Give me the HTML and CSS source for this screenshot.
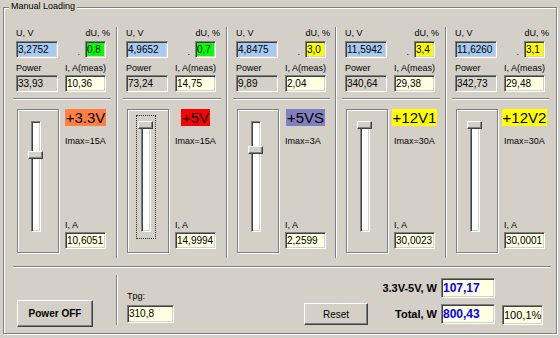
FILE: index.html
```html
<!DOCTYPE html>
<html lang="en">

<head>
    <meta charset="UTF-8">
    <title>Manual Loading</title>
    <link rel="stylesheet" href="styles.css">
</head>

<body>
    <div class="group">
        <span class="legend">Manual Loading</span>

        <div class="channels">
            <!-- +3.3V -->
            <div class="ch">
                <div class="meas">
                    <div class="row labels"><span class="lbl-l">U, V</span><span class="lbl-r du-lbl">dU, %</span></div>
                    <div class="row boxes">
                        <div class="edit volt">3,2752</div>
                        <span class="dot">.</span>
                        <div class="edit du green">0,8</div>
                    </div>
                    <div class="row labels second"><span class="lbl-l">Power</span><span class="lbl-r">I, A(meas)</span></div>
                    <div class="row boxes tight">
                        <div class="edit ro">33,93</div>
                        <div class="edit cur">10,36</div>
                    </div>
                </div>
                <div class="hsep"></div>
                <div class="load">
                    <div class="frame">
                        <div class="focus">
                            <div class="track"><div class="thumb" style="top: 29px"></div></div>
                        </div>
                    </div>
                    <div class="side">
                        <div class="name"><span class="orange">+3.3V</span></div>
                        <div class="imax">Imax=15A</div>
                        <div class="ia">I, A</div>
                        <div class="edit cur">10,6051</div>
                    </div>
                </div>
            </div>

            <!-- +5V -->
            <div class="ch">
                <div class="meas">
                    <div class="row labels"><span class="lbl-l">U, V</span><span class="lbl-r du-lbl">dU, %</span></div>
                    <div class="row boxes">
                        <div class="edit volt">4,9652</div>
                        <span class="dot">.</span>
                        <div class="edit du green">0,7</div>
                    </div>
                    <div class="row labels second"><span class="lbl-l">Power</span><span class="lbl-r">I, A(meas)</span></div>
                    <div class="row boxes tight">
                        <div class="edit ro">73,24</div>
                        <div class="edit cur">14,75</div>
                    </div>
                </div>
                <div class="hsep"></div>
                <div class="load">
                    <div class="frame">
                        <div class="focus active">
                            <div class="track"><div class="thumb" style="top: -1px"></div></div>
                        </div>
                    </div>
                    <div class="side">
                        <div class="name"><span class="red">+5V</span></div>
                        <div class="imax">Imax=15A</div>
                        <div class="ia">I, A</div>
                        <div class="edit cur">14,9994</div>
                    </div>
                </div>
            </div>

            <!-- +5VS -->
            <div class="ch">
                <div class="meas">
                    <div class="row labels"><span class="lbl-l">U, V</span><span class="lbl-r du-lbl">dU, %</span></div>
                    <div class="row boxes">
                        <div class="edit volt">4,8475</div>
                        <span class="dot">.</span>
                        <div class="edit du yellow">3,0</div>
                    </div>
                    <div class="row labels second"><span class="lbl-l">Power</span><span class="lbl-r">I, A(meas)</span></div>
                    <div class="row boxes tight">
                        <div class="edit ro">9,89</div>
                        <div class="edit cur">2,04</div>
                    </div>
                </div>
                <div class="hsep"></div>
                <div class="load">
                    <div class="frame">
                        <div class="focus">
                            <div class="track"><div class="thumb" style="top: 24px"></div></div>
                        </div>
                    </div>
                    <div class="side">
                        <div class="name"><span class="violet">+5VS</span></div>
                        <div class="imax">Imax=3A</div>
                        <div class="ia">I, A</div>
                        <div class="edit cur">2,2599</div>
                    </div>
                </div>
            </div>

            <!-- +12V1 -->
            <div class="ch">
                <div class="meas">
                    <div class="row labels"><span class="lbl-l">U, V</span><span class="lbl-r du-lbl">dU, %</span></div>
                    <div class="row boxes">
                        <div class="edit volt">11,5942</div>
                        <span class="dot">.</span>
                        <div class="edit du yellow">3,4</div>
                    </div>
                    <div class="row labels second"><span class="lbl-l">Power</span><span class="lbl-r">I, A(meas)</span></div>
                    <div class="row boxes tight">
                        <div class="edit ro">340,64</div>
                        <div class="edit cur">29,38</div>
                    </div>
                </div>
                <div class="hsep"></div>
                <div class="load">
                    <div class="frame">
                        <div class="focus">
                            <div class="track"><div class="thumb" style="top: -1px"></div></div>
                        </div>
                    </div>
                    <div class="side">
                        <div class="name"><span class="yellow">+12V1</span></div>
                        <div class="imax">Imax=30A</div>
                        <div class="ia">I, A</div>
                        <div class="edit cur">30,0023</div>
                    </div>
                </div>
            </div>

            <!-- +12V2 -->
            <div class="ch">
                <div class="meas">
                    <div class="row labels"><span class="lbl-l">U, V</span><span class="lbl-r du-lbl">dU, %</span></div>
                    <div class="row boxes">
                        <div class="edit volt">11,6260</div>
                        <span class="dot">.</span>
                        <div class="edit du yellow">3,1</div>
                    </div>
                    <div class="row labels second"><span class="lbl-l">Power</span><span class="lbl-r">I, A(meas)</span></div>
                    <div class="row boxes tight">
                        <div class="edit ro">342,73</div>
                        <div class="edit cur">29,48</div>
                    </div>
                </div>
                <div class="hsep"></div>
                <div class="load">
                    <div class="frame">
                        <div class="focus">
                            <div class="track"><div class="thumb" style="top: -1px"></div></div>
                        </div>
                    </div>
                    <div class="side">
                        <div class="name"><span class="yellow">+12V2</span></div>
                        <div class="imax">Imax=30A</div>
                        <div class="ia">I, A</div>
                        <div class="edit cur">30,0001</div>
                    </div>
                </div>
            </div>
        </div>

        <div class="hline"></div>

        <div class="bottom">
            <button class="btn power">Power OFF</button>
            <div class="vsep"></div>
            <div class="tpg">
                <div class="tpg-lbl">Tpg:</div>
                <div class="edit cur tpg-box">310,8</div>
            </div>
            <button class="btn reset">Reset</button>
            <div class="totals">
                <div class="trow">
                    <span class="tlbl">3.3V-5V, W</span>
                    <div class="edit total">107,17</div>
                </div>
                <div class="trow second">
                    <span class="tlbl">Total, W</span>
                    <div class="edit total">800,43</div>
                    <div class="edit pct">100,1%</div>
                </div>
            </div>
        </div>
    </div>
</body>

</html>
```

FILE: styles.css
```css
body {
    margin: 0;
    width: 560px;
    height: 338px;
    overflow: hidden;
    background-color: #d4d0c8;
    font-family: "Liberation Sans", Arial, sans-serif;
    font-size: 9px;
    color: #000;
}

/* group box */
.group {
    position: relative;
    box-sizing: border-box;
    width: 554px;
    height: 327px;
    margin: 7px 0 0 3px;
    padding: 19px 0 0 2px;
    border: 1px solid #808080;
    box-shadow: inset 1px 1px #fff, 1px 1px #fff;
}

.legend {
    position: absolute;
    top: -7px;
    left: 5px;
    padding: 0 2px;
    line-height: 11px;
    background-color: #d4d0c8;
}

.channels {
    display: grid;
    grid-template-columns: 110px 110px 109px 110px 109px;
    height: 231px;
}

.ch {
    border-left: 1px solid #808080;
    box-shadow: inset 1px 0 #fff;
}

.ch:first-child {
    border-left-color: transparent;
    box-shadow: none;
}

/* measured values */
.meas {
    padding: 1px 0 0 9px;
}

.row {
    display: flex;
    width: 90px;
}

.labels {
    height: 11px;
    line-height: 11px;
    white-space: nowrap;
}

.labels.second {
    margin-top: 5px;
}

.lbl-l {
    width: 49px;
}

.lbl-r {
    flex: 1;
}

.du-lbl {
    text-align: right;
    margin-right: -4px;
}

.boxes {
    align-items: flex-end;
    margin-top: 2px;
}

.boxes.tight {
    margin-top: 1px;
}

.dot {
    margin-left: auto;
    margin-right: 5px;
    line-height: 11px;
}

/* sunken edit box */
.edit {
    box-sizing: border-box;
    height: 17px;
    padding-left: 1px;
    border: 1px solid;
    border-color: #808080 #fff #fff #808080;
    box-shadow: inset 1px 1px #404040, inset -1px -1px #d4d0c8;
    font-size: 10px;
    line-height: 15px;
    white-space: nowrap;
    overflow: hidden;
    background-color: #ffffe1;
}

.volt {
    width: 42px;
    background-color: #a6caf0;
}

.du {
    width: 21px;
}

.green {
    background-color: #00ff00;
}

.yellow {
    background-color: #ffff00;
}

.ro {
    width: 42px;
    background-color: #d4d0c8;
}

.cur {
    width: 41px;
}

.boxes .cur {
    margin-left: 7px;
}

.hsep {
    border-top: 1px solid #808080;
    border-bottom: 1px solid #fff;
    margin: 6px 5px 0 6px;
}

/* slider + channel info */
.load {
    display: flex;
    margin: 9px 0 0 10px;
}

.frame {
    box-sizing: border-box;
    width: 42px;
    height: 144px;
    border: 1px solid #808080;
    box-shadow: inset 1px 1px #fff, 1px 1px #fff;
}

.focus {
    width: 10px;
    height: 111px;
    padding: 5px 4px 6px 4px;
    margin: 5px 0 0 8px;
    border: 1px dotted transparent;
}

.focus.active {
    border-color: #303030;
}

.track {
    position: relative;
    box-sizing: border-box;
    width: 10px;
    height: 111px;
    background-color: #fff;
    border: 1px solid;
    border-color: #808080 #fff #fff #808080;
    box-shadow: inset 1px 1px #404040, inset -1px -1px #d4d0c8;
}

.thumb {
    position: absolute;
    left: -4px;
    box-sizing: border-box;
    width: 15px;
    height: 8px;
    background-color: #d4d0c8;
    border: 1px solid;
    border-color: #fff #404040 #404040 #fff;
    box-shadow: inset -1px -1px #808080;
}

.side {
    display: flex;
    flex-direction: column;
    box-sizing: border-box;
    width: 41px;
    height: 144px;
    margin-left: 6px;
    padding-bottom: 4px;
}

.name {
    display: flex;
    justify-content: center;
    height: 17px;
}

.name span {
    padding: 0 1px;
    font-size: 15px;
    line-height: 17px;
    white-space: nowrap;
}

.orange { background-color: #ff8040; }
.red { background-color: #ff0000; }
.violet { background-color: #8080c0; }

.imax {
    margin-top: 10px;
    line-height: 11px;
    white-space: nowrap;
}

.ia {
    margin-top: auto;
    line-height: 11px;
}

.side .edit {
    margin-top: 1px;
}

/* bottom strip */
.hline {
    border-top: 1px solid #808080;
    border-bottom: 1px solid #fff;
    margin: 8px 5px 0 7px;
}

.bottom {
    display: flex;
    align-items: flex-start;
    height: 65px;
}

.btn {
    box-sizing: border-box;
    padding: 0;
    font-family: inherit;
    color: #000;
    background-color: #d4d0c8;
    border: 1px solid;
    border-color: #fff #404040 #404040 #fff;
    box-shadow: inset -1px -1px #808080;
    cursor: pointer;
}

.power {
    width: 76px;
    height: 27px;
    margin: 32px 0 0 11px;
    font-size: 10px;
    font-weight: bold;
}

.vsep {
    height: 50px;
    margin: 7px 0 0 23px;
    border-left: 1px solid #808080;
    border-right: 1px solid #fff;
}

.tpg {
    margin: 23px 0 0 9px;
}

.tpg-lbl {
    line-height: 11px;
}

.tpg-box {
    width: 47px;
    height: 18px;
    margin-top: 3px;
}

.reset {
    width: 64px;
    height: 22px;
    margin: 35px 0 0 130px;
    font-size: 10px;
}

.totals {
    margin: 10px 0 0 9px;
}

.trow {
    display: flex;
    align-items: flex-start;
}

.trow.second {
    margin-top: 6px;
}

.tlbl {
    width: 60px;
    text-align: right;
    font-size: 11px;
    font-weight: bold;
    line-height: 20px;
    white-space: nowrap;
}

.total {
    width: 54px;
    height: 20px;
    margin-left: 4px;
    padding-left: 1px;
    color: #0000ff;
    font-size: 12px;
    font-weight: bold;
    line-height: 18px;
}

.pct {
    width: 41px;
    height: 20px;
    margin: 1px 0 0 7px;
    padding-left: 1px;
    font-size: 11px;
    line-height: 18px;
}
```
